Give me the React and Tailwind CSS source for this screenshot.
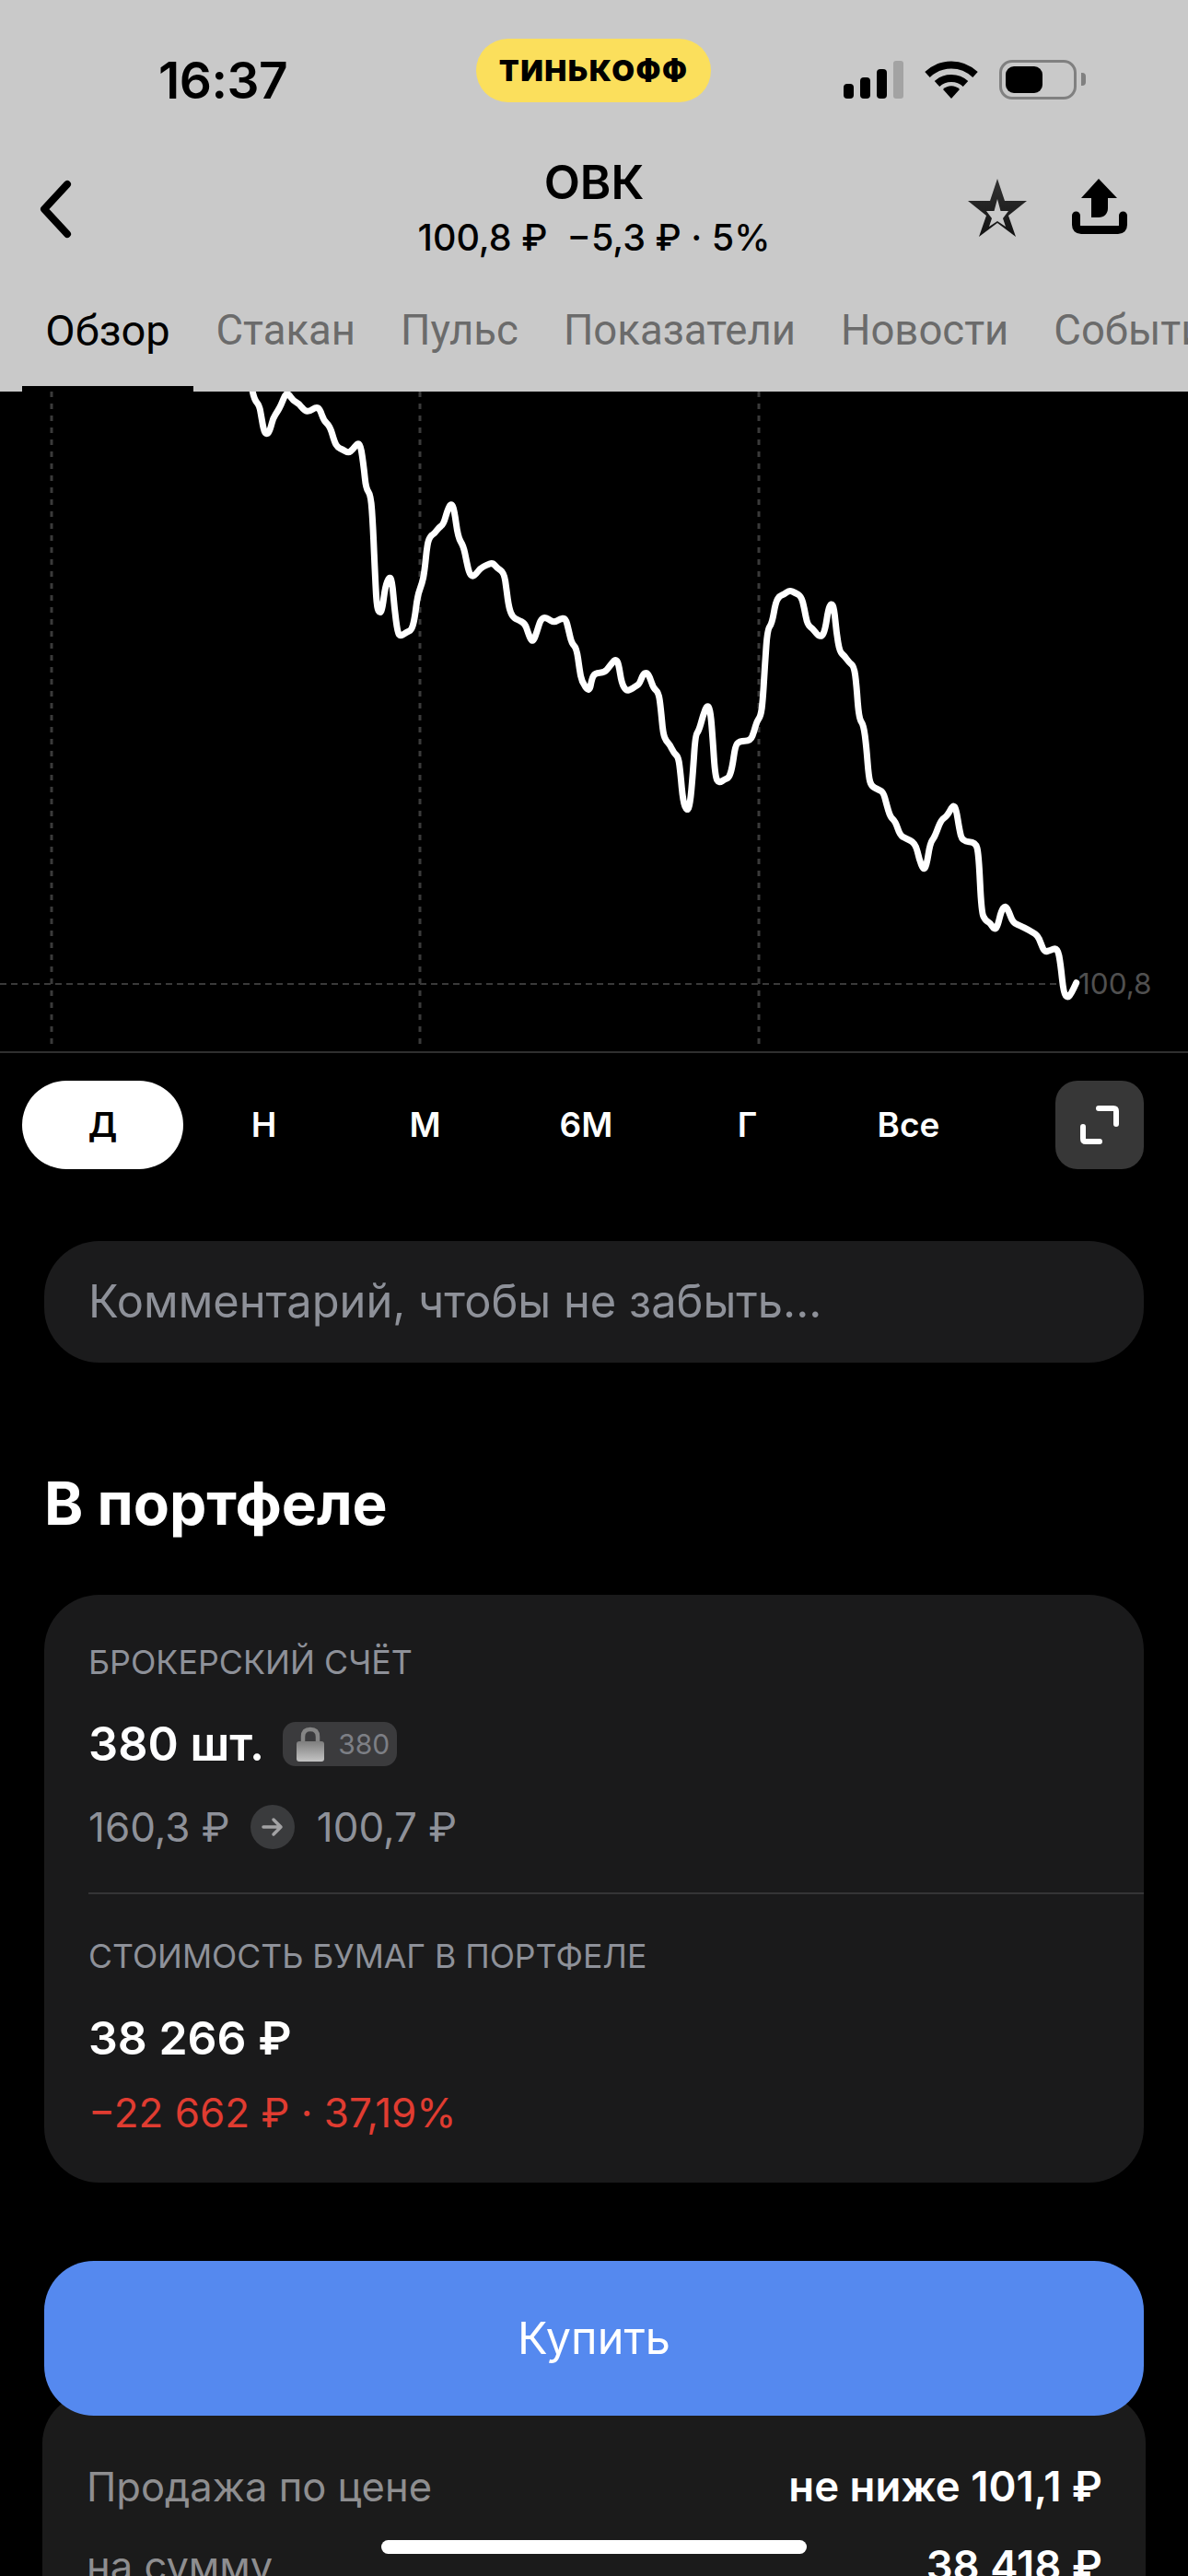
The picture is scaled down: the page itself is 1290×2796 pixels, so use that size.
import React from "react";

// chart traced in three pieces, each { origin, points in 3x crop coordinates }
const CHART_PARTS = [
  {
    x: 260,
    y: 420,
    pts: [[43,15],[48,40],[65,60],[72,100],[80,145],[90,155],[100,140],[110,100],[125,78],[135,60],[150,22],[160,22],[175,45],[195,55],[212,78],[228,80],[250,65],[262,72],[275,110],[295,128],[310,180],[320,197],[335,203],[355,215],[368,205],[385,183],[395,190],[405,260],[412,330],[428,352],[435,450],[443,640],[448,720],[458,738],[466,720],[475,650],[488,617],[497,630],[505,720],[515,800],[525,812],[545,798],[560,792],[570,760],[580,680],[595,640],[603,600],[612,510],[622,485],[635,478],[650,457],[665,447],[678,400],[690,378],[700,400],[712,490],[730,518],[740,570],[750,610],[760,617],[770,610],[785,590],[805,580],[825,572],[840,590],[862,605],[870,660],[878,720],[890,750],[910,760],[930,770],[940,800],[950,825],[958,827],[968,800],[980,760],[992,750],[1005,755],[1025,767],[1045,755],[1062,752],[1072,790],[1082,835],[1098,850],[1108,920],[1115,960]],
  },
  {
    x: 640,
    y: 620,
    pts: [[0,395],[8,350],[18,332],[50,330],[65,310],[85,285],[95,300],[105,365],[120,390],[135,385],[150,375],[162,368],[175,335],[187,330],[197,345],[208,380],[225,395],[232,440],[240,530],[250,552],[262,565],[275,592],[290,605],[297,660],[305,750],[318,782],[328,760],[337,660],[345,535],[357,518],[370,470],[385,432],[395,460],[402,550],[410,670],[422,690],[440,678],[455,672],[465,640],[475,570],[488,553],[525,553],[537,520],[545,490],[558,472],[565,420],[572,300],[580,190],[595,170],[607,100],[620,80],[635,75],[652,62],[670,70],[690,82],[700,120],[710,175],[728,187],[745,210],[758,212],[768,190],[778,125],[788,103],[797,120],[805,200],[815,262],[830,275],[847,298],[862,310],[870,370],[878,480],[893,500],[902,570],[910,670],[918,700],[940,710],[958,720],[968,760],[980,800],[997,815],[1012,860],[1030,870],[1062,885]],
  },
  {
    x: 900,
    y: 800,
    pts: [[295,400],[308,433],[318,420],[330,345],[345,325],[365,270],[385,258],[405,220],[415,235],[425,300],[435,340],[478,342],[488,380],[497,570],[510,597],[525,605],[540,628],[550,615],[562,565],[575,548],[587,570],[600,605],[625,615],[650,628],[680,645],[690,670],[702,700],[720,695],[745,685],[755,740],[765,835],[778,850],[790,835],[806,800]],
  },
];

function buildChartPath() {
  const pts = CHART_PARTS.flatMap((part) =>
    part.pts.map(([zx, zy]) => [part.x + zx / 3, part.y + zy / 3])
  );
  let d = `M${pts[0][0].toFixed(1)} ${pts[0][1].toFixed(1)}`;
  for (let i = 1; i < pts.length - 1; i++) {
    const mx = (pts[i][0] + pts[i + 1][0]) / 2;
    const my = (pts[i][1] + pts[i + 1][1]) / 2;
    d += ` Q${pts[i][0].toFixed(1)} ${pts[i][1].toFixed(1)} ${mx.toFixed(1)} ${my.toFixed(1)}`;
  }
  const last = pts[pts.length - 1];
  return `${d} L${last[0].toFixed(1)} ${last[1].toFixed(1)}`;
}

const TABS = ["Обзор", "Стакан", "Пульс", "Показатели", "Новости", "События"];
const RANGES = ["Д", "Н", "М", "6М", "Г", "Все"];

function StatusIcons() {
  return (
    <div className="flex items-start">
      <svg width="66" height="42" viewBox="0 0 66 42">
        <rect x="0" y="25" width="11" height="16" rx="4" fill="#000" />
        <rect x="18" y="18" width="11" height="23" rx="4" fill="#000" />
        <rect x="36" y="9" width="11" height="32" rx="4" fill="#000" />
        <rect x="54" y="0" width="11" height="41" rx="3" fill="#a3a3a3" />
      </svg>
      <svg width="58" height="43" viewBox="0 0 58 43" className="ml-[22px] -mt-[1px]">
        <path d="M3 16 C18 2 40 2 55 16" fill="none" stroke="#000" strokeWidth="8" />
        <path d="M13.5 26 C22 18 36 18 44.5 26" fill="none" stroke="#000" strokeWidth="8" />
        <path d="M20 32 C25 27 33 27 38 32 L29 42 Z" fill="#000" />
      </svg>
      <div className="ml-[23px] -mt-[1px] h-[43px] w-[84px] rounded-[14px] border-[3px] border-[#808080] p-[4px]">
        <div className="h-[29px] w-[40px] rounded-[9px] bg-black" />
      </div>
      <div className="ml-[5px] mt-[13px] h-[14px] w-[5px] rounded-r-[4px] bg-[#808080]" />
    </div>
  );
}

function Header() {
  return (
    <div className="flex h-[425px] flex-col bg-[#c9c9c9] font-[Inter,sans-serif] text-black">
      <div className="flex h-[130px] items-start">
        <div className="ml-[172px] mt-[55px] w-[345px] text-[55px] leading-[64px] font-semibold tracking-[-0.5px]">
          16:37
        </div>
        <div className="mt-[42px] flex h-[69px] w-[255px] items-center justify-center rounded-full bg-[#fbdf5c] text-[32px] font-black tracking-[1.5px]">
          ТИНЬКОФФ
        </div>
        <div className="ml-[144px] mt-[66px]">
          <StatusIcons />
        </div>
      </div>

      <div className="flex h-[170px] items-start">
        <svg width="40" height="66" viewBox="0 0 40 66" className="ml-[40px] mt-[64px] shrink-0">
          <path d="M33 6 L8 33 L33 60" fill="none" stroke="#000" strokeWidth="8" strokeLinecap="round" strokeLinejoin="round" />
        </svg>
        <div className="ml-[205px] flex w-[720px] shrink-0 flex-col items-center">
          <div className="mt-[38px] text-[51px] leading-[60px] font-semibold">ОВК</div>
          <div className="mt-[6px] text-[39.5px] leading-[48px] font-medium whitespace-pre">
            100,8 ₽  −5,3 ₽ · 5%
          </div>
        </div>
        <svg width="68" height="66" viewBox="0 0 68 66" className="ml-[44px] mt-[63px] shrink-0">
          <defs>
            <linearGradient id="starFill" x1="0" y1="0" x2="0" y2="1">
              <stop offset="0" stopColor="#333333" />
              <stop offset="1" stopColor="#111111" />
            </linearGradient>
          </defs>
          <path
            fillRule="evenodd"
            fill="url(#starFill)"
            d="M34 1 L42 25 L66 25 L46 41 L54 64 L34 49 L14 64 L22 41 L2 25 L26 25 Z M34 23 L30.5 36 L22 36 L28 44 L25 53 L34 47 L43 53 L40 44 L46 36 L37.5 36 Z"
          />
        </svg>
        <svg width="60" height="60" viewBox="0 0 60 60" className="ml-[47px] mt-[64px] shrink-0">
          <path d="M29 0 L49 21 L39 21 L39 32 C39 38 35 42 29 42 L21 42 L21 21 L10 21 Z" fill="#000" />
          <path d="M4.5 40 L4.5 50 Q4.5 55.5 10 55.5 L50 55.5 Q55.5 55.5 55.5 50 L55.5 40" fill="none" stroke="#000" strokeWidth="9" strokeLinecap="round" />
        </svg>
      </div>

      <div className="flex h-[125px] overflow-hidden pl-[24px] font-[Roboto,sans-serif] whitespace-nowrap">
        {TABS.map((tab, index) => (
          <div
            key={tab}
            className={`flex h-full shrink-0 items-start pt-[30px] leading-[58px] ${
              index === 0
                ? "w-[186px] justify-center border-b-[6px] border-black text-[47px] text-black"
                : "px-[24.5px] text-[45.5px] text-[#6b6b6b]"
            }`}
          >
            {tab}
          </div>
        ))}
      </div>
    </div>
  );
}

function Chart() {
  return (
    <div className="relative h-[718px] border-b-2 border-[#2f2f2f] bg-black">
      <svg width="1290" height="716" viewBox="0 425 1290 716" className="block">
        <g stroke="#3a3a3a" fill="none">
          <path d="M56 425 V1137" strokeWidth="3" strokeDasharray="6 7" />
          <path d="M456 425 V1137" strokeWidth="3" strokeDasharray="6 7" />
          <path d="M824 425 V1137" strokeWidth="3" strokeDasharray="6 7" />
          <path d="M0 1068 H1150" strokeWidth="2" strokeDasharray="7 5" />
        </g>
        <path d={buildChartPath()} fill="none" stroke="#fff" strokeWidth="7" strokeLinecap="round" strokeLinejoin="round" />
      </svg>
      <span className="absolute left-[1171px] top-[624px] font-[Inter,sans-serif] text-[31.5px] leading-[38px] text-[#505050]">
        100,8
      </span>
    </div>
  );
}

function RangeBar() {
  return (
    <div className="mt-[30px] flex h-[96px] pl-[24px] text-[37px] font-semibold">
      {RANGES.map((range, index) => (
        <div
          key={range}
          className={`flex w-[175px] items-center justify-center rounded-full ${
            index === 0 ? "bg-white text-black" : "text-white"
          }`}
        >
          {range}
        </div>
      ))}
      <div className="ml-[72px] flex h-[96px] w-[96px] items-center justify-center rounded-[24px] bg-[#373737]">
        <svg width="42" height="42" viewBox="0 0 42 42">
          <path d="M20 3 H36 Q39 3 39 6 V20" fill="none" stroke="#fff" strokeWidth="6" strokeLinecap="round" />
          <path d="M3 23 V36 Q3 39 6 39 H21" fill="none" stroke="#fff" strokeWidth="6" strokeLinecap="round" />
        </svg>
      </div>
    </div>
  );
}

function PortfolioCard() {
  return (
    <div className="mx-[48px] mt-[63px] h-[638px] rounded-[60px] bg-[#1a1a1b] pt-[51px]">
      <div className="pl-[48px] text-[35.8px] leading-[44px] text-[#8e9199]">БРОКЕРСКИЙ СЧЁТ</div>
      <div className="mt-[37px] flex h-[60px] items-center pl-[48px]">
        <span className="text-[50.5px] leading-[60px] font-semibold text-white">380 шт.</span>
        <span className="ml-[20px] flex h-[48px] w-[124px] items-center rounded-[14px] bg-[#3b3b3d] pl-[15px] text-[30px] text-[#7d7f85]">
          <svg width="30" height="38" viewBox="0 0 30 38" className="shrink-0">
            <defs>
              <linearGradient id="lockFill" x1="0" y1="0" x2="0" y2="1">
                <stop offset="0" stopColor="#7e7e7e" />
                <stop offset="1" stopColor="#c4c4c4" />
              </linearGradient>
            </defs>
            <path d="M7 18 V11 Q7 3 15 3 Q23 3 23 11 V18" fill="none" stroke="#858585" strokeWidth="4.5" />
            <rect x="0" y="16" width="30" height="22" rx="3" fill="url(#lockFill)" />
          </svg>
          <span className="ml-[15px]">380</span>
        </span>
      </div>
      <div className="mt-[32px] flex h-[56px] items-center pl-[48px] text-[44px] text-[#8e9199]">
        <span>160,3 ₽</span>
        <span className="ml-[22px] mr-[24px] flex h-[48px] w-[48px] items-center justify-center rounded-full bg-[#3a3b3d]">
          <svg width="24" height="24" viewBox="0 0 24 24">
            <path d="M2 12 H21 M13 4 L21 12 L13 20" fill="none" stroke="#a2a2a4" strokeWidth="3.5" strokeLinecap="round" strokeLinejoin="round" />
          </svg>
        </span>
        <span>100,7 ₽</span>
      </div>
      <div className="ml-[48px] mt-[43px] h-[2px] bg-[#343436]" />
      <div className="mt-[46px] pl-[48px] text-[35.6px] leading-[44px] text-[#8e9199]">СТОИМОСТЬ БУМАГ В ПОРТФЕЛЕ</div>
      <div className="mt-[36px] pl-[48px] text-[50px] leading-[60px] font-semibold text-white">38 266 ₽</div>
      <div className="mt-[23px] pl-[48px] text-[44px] leading-[56px] text-[#e03c31]">−22 662 ₽ · 37,19%</div>
    </div>
  );
}

export default function App() {
  return (
    <div className="relative h-[2796px] w-[1290px] overflow-hidden bg-black font-[Inter,sans-serif]">
      <Header />
      <Chart />
      <RangeBar />

      <div className="mx-[48px] mt-[78px] flex h-[132px] items-center rounded-[60px] bg-[#1b1b1c] pl-[48px] text-[48.8px] text-[#8e9199]">
        Комментарий, чтобы не забыть...
      </div>

      <h2 className="mt-[117px] pl-[48px] text-[64px] leading-[72px] font-bold text-white">В портфеле</h2>

      <PortfolioCard />

      <div className="relative z-10 mx-[48px] mt-[85px] flex h-[168px] items-center justify-center rounded-[54px] bg-[#5589ef] text-[48.6px] text-white">
        Купить
      </div>

      <div className="mx-[46px] -mt-[24px] h-[260px] rounded-[54px] bg-[#1b1b1b] pr-[47px] pl-[48px] pt-[73px] leading-[56px]">
        <div className="flex items-center justify-between">
          <span className="text-[43.5px] text-[#8e8e90]">Продажа по цене</span>
          <span className="text-[45.5px] font-semibold text-white">не ниже 101,1 ₽</span>
        </div>
        <div className="mt-[30px] flex items-center justify-between">
          <span className="text-[43.5px] text-[#8e8e90]">на сумму</span>
          <span className="text-[45.5px] font-semibold text-white">38 418 ₽</span>
        </div>
      </div>

      <div className="absolute left-[414px] top-[2757px] z-20 h-[15px] w-[462px] rounded-full bg-white" />
    </div>
  );
}
